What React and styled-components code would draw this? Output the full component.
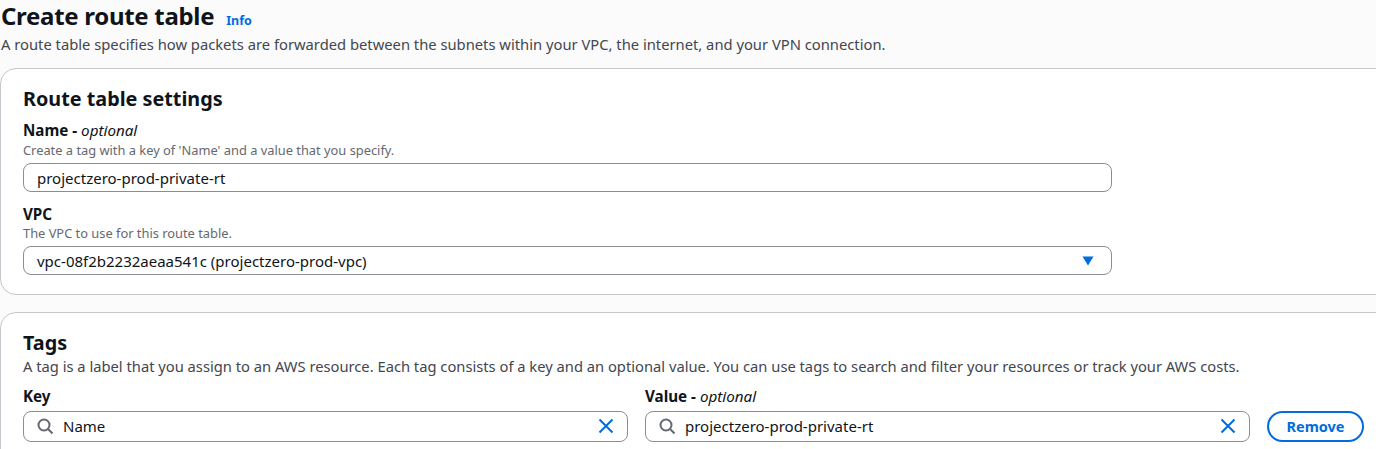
import React from "react";
import styled, { createGlobalStyle } from "styled-components";

const GlobalStyle = createGlobalStyle`
	html, body {
		margin: 0;
		padding: 0;
		height: 449px;
		overflow: hidden;
		background: #fbfbfb;
		font-family: "Noto Sans", "Open Sans", sans-serif;
		color: #0f141a;
	}
`;

function SearchIcon() {
	return (
		<svg width="16" height="16" viewBox="0 0 16 16" fill="none" stroke="#656871" strokeWidth="2">
			<circle cx="7" cy="7" r="5.5" />
			<path d="M11 11l4.5 4.5" />
		</svg>
	);
}

function ClearIcon() {
	return (
		<svg width="16" height="16" viewBox="0 0 16 16" fill="none" stroke="#006ce0" strokeWidth="2">
			<path d="M1.5 1.5l13 13M14.5 1.5l-13 13" />
		</svg>
	);
}

function TagField({ label, value, optional }) {
	return (
		<Field>
			<Label>
				{label}
				{optional && (
					<>
						{" - "}
						<i>optional</i>
					</>
				)}
			</Label>
			<InputBox $icon>
				<SearchIcon />
				<Value>{value}</Value>
				<ClearIcon />
			</InputBox>
		</Field>
	);
}

export default function App() {
	return (
		<Page>
			<GlobalStyle />
			<Header>
				<TitleRow>
					<Title>Create route table</Title>
					<InfoLink href="#">Info</InfoLink>
				</TitleRow>
				<Subtitle>
					A route table specifies how packets are forwarded between the subnets within your VPC, the internet, and
					your VPN connection.
				</Subtitle>
			</Header>

			<Card>
				<CardTitle>Route table settings</CardTitle>
				<Label>
					Name - <i>optional</i>
				</Label>
				<Hint>Create a tag with a key of 'Name' and a value that you specify.</Hint>
				<InputBox $wide>
					<Value>projectzero-prod-private-rt</Value>
				</InputBox>
				<Label $spaced>VPC</Label>
				<Hint $tight>The VPC to use for this route table.</Hint>
				<InputBox $wide>
					<Value>vpc-08f2b2232aeaa541c (projectzero-prod-vpc)</Value>
					<Caret viewBox="0 0 12 10">
						<path d="M0.5 0.5h11L6 9.5z" />
					</Caret>
				</InputBox>
			</Card>

			<Card $last>
				<CardTitle $tight>Tags</CardTitle>
				<CardText>
					A tag is a label that you assign to an AWS resource. Each tag consists of a key and an optional value. You
					can use tags to search and filter your resources or track your AWS costs.
				</CardText>
				<TagRow>
					<TagField label="Key" value="Name" />
					<TagField label="Value" value="projectzero-prod-private-rt" optional />
					<RemoveButton>Remove</RemoveButton>
				</TagRow>
			</Card>
		</Page>
	);
}

const Page = styled.div`
	height: 449px;
	overflow: hidden;
`;

const Header = styled.div`
	padding: 0 0 0 1px;
	height: 68px;
`;

const TitleRow = styled.div`
	display: flex;
	align-items: baseline;
	gap: 12px;
	height: 34px;
`;

const Title = styled.h1`
	margin: 0;
	font-size: 24px;
	line-height: 32px;
	font-weight: 700;
	letter-spacing: -0.3px;
`;

const InfoLink = styled.a`
	font-size: 12.5px;
	font-weight: 700;
	color: #006ce0;
	text-decoration: none;
`;

const Subtitle = styled.p`
	margin: 0;
	font-size: 14.75px;
	line-height: 20px;
	color: #424650;
	white-space: nowrap;
`;

const Card = styled.section`
	box-sizing: border-box;
	width: 1420px;
	height: ${(props) => (props.$last ? "200px" : "227px")};
	margin-bottom: 17px;
	padding: 16px 0 0 22px;
	background: #fff;
	border: 1px solid #c6c6cd;
	border-radius: 16px;
`;

const CardTitle = styled.h2`
	margin: 0 0 ${(props) => (props.$tight ? "-1px" : "6px")};
	font-size: 19.8px;
	line-height: 28px;
	font-weight: 700;
`;

const CardText = styled.p`
	margin: 0 0 9px;
	font-size: 14.73px;
	line-height: 20px;
	color: #424650;
	white-space: nowrap;
`;

const Label = styled.div`
	margin-top: ${(props) => (props.$spaced ? "11px" : "0")};
	font-size: 15.2px;
	line-height: 22px;
	font-weight: 700;

	i {
		font-weight: 400;
	}
`;

const Hint = styled.div`
	font-size: 12.85px;
	line-height: 16px;
	color: #656871;
	margin: ${(props) => (props.$tight ? "0 0 5px" : "1px 0 5px")};
`;

const InputBox = styled.div`
	box-sizing: border-box;
	display: flex;
	align-items: center;
	gap: 10px;
	width: ${(props) => (props.$wide ? "1089px" : "605px")};
	height: ${(props) => (props.$icon ? "31px" : "29px")};
	padding: 0 13px ${(props) => (props.$icon ? "1px" : "0")} 13px;
	background: #fff;
	border: 1px solid #8c8c94;
	border-radius: 8px;
`;

const Value = styled.span`
	flex: 1;
	font-size: 15px;
	line-height: 20px;
`;

const Caret = styled.svg`
	width: 12px;
	height: 10px;
	margin-right: 4px;
	fill: #006ce0;
`;

const TagRow = styled.div`
	display: flex;
	align-items: flex-end;
	gap: 17px;
`;

const Field = styled.div`
	display: flex;
	flex-direction: column;
	gap: 4px;
`;

const RemoveButton = styled.button`
	box-sizing: border-box;
	width: 97px;
	height: 31px;
	padding: 0 0 1px;
	background: #fff;
	border: 2px solid #006ce0;
	border-radius: 20px;
	color: #006ce0;
	font-family: inherit;
	font-size: 14.5px;
	font-weight: 700;
`;
